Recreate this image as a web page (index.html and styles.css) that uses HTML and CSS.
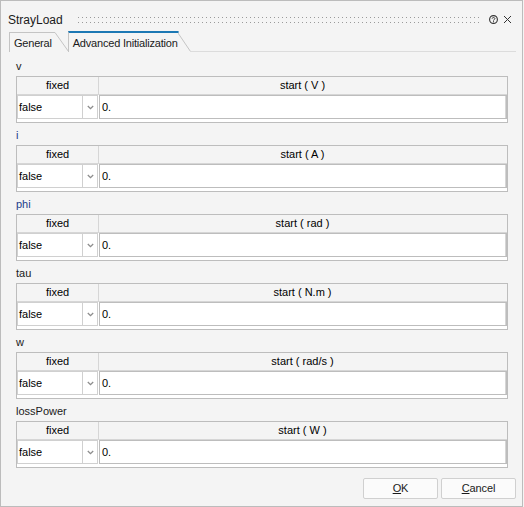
FILE: index.html
```html
<!DOCTYPE html>
<html>
<head>
<meta charset="utf-8">
<link rel="stylesheet" href="styles.css">
</head>
<body>
<div class="window">
  <div class="titlebar">
    <span class="title">StrayLoad</span>
    <svg class="grip" height="6"><defs><pattern id="dots" width="4" height="5" patternUnits="userSpaceOnUse"><rect width="1" height="1" fill="#9a9a9a"/></pattern></defs><rect width="100%" height="6" fill="url(#dots)"/></svg>
    <svg class="help" width="9" height="9" viewBox="0 0 9 9"><circle cx="4.5" cy="4.5" r="3.9" fill="none" stroke="#333" stroke-width="1.1"/><path d="M3.1 3.6 C3.1 2.2 5.9 2.2 5.9 3.6 C5.9 4.6 4.5 4.6 4.5 5.6" fill="none" stroke="#333" stroke-width="1"/><rect x="4" y="6.2" width="1" height="1" fill="#333"/></svg>
    <svg class="close" width="9" height="9" viewBox="0 0 9 9"><path d="M1 1 L8 8 M8 1 L1 8" stroke="#333" stroke-width="1"/></svg>
  </div>
  <div class="tabbar">
    <div class="tab">
      <span class="tab-label">General</span>
      <svg class="tab-slant" width="14" height="20" viewBox="0 0 14 20"><path d="M0 0.5 L13.5 19.5" stroke="#c4c4c4" stroke-width="1" fill="none"/></svg>
    </div>
    <div class="tab tab-active">
      <span class="tab-label">Advanced Initialization</span>
      <svg class="tab-slant" width="13" height="21" viewBox="0 0 13 21"><path d="M0 2 L12.5 20.5" stroke="#c4c4c4" stroke-width="1" fill="none"/><path d="M0 1 L0.6 1" stroke="#1c78b4" stroke-width="2"/></svg>
    </div>
    <div class="tab-line"></div>
  </div>
  <div class="content">
    <section class="param">
      <div class="param-name">v</div>
      <div class="grid">
        <div class="grid-head"><div class="col-fixed">fixed</div><div class="col-start">start ( V )</div></div>
        <div class="grid-row"><div class="combo"><span class="combo-text">false</span><span class="combo-arrow"><svg width="7" height="5" viewBox="0 0 7 5"><path d="M0.8 1 L3.5 3.7 L6.2 1" fill="none" stroke="#8c8c8c" stroke-width="1.3"/></svg></span></div><div class="input">0.</div></div>
      </div>
    </section>
    <section class="param">
      <div class="param-name param-name-mod">i</div>
      <div class="grid">
        <div class="grid-head"><div class="col-fixed">fixed</div><div class="col-start">start ( A )</div></div>
        <div class="grid-row"><div class="combo"><span class="combo-text">false</span><span class="combo-arrow"><svg width="7" height="5" viewBox="0 0 7 5"><path d="M0.8 1 L3.5 3.7 L6.2 1" fill="none" stroke="#8c8c8c" stroke-width="1.3"/></svg></span></div><div class="input">0.</div></div>
      </div>
    </section>
    <section class="param">
      <div class="param-name param-name-mod">phi</div>
      <div class="grid">
        <div class="grid-head"><div class="col-fixed">fixed</div><div class="col-start">start ( rad )</div></div>
        <div class="grid-row"><div class="combo"><span class="combo-text">false</span><span class="combo-arrow"><svg width="7" height="5" viewBox="0 0 7 5"><path d="M0.8 1 L3.5 3.7 L6.2 1" fill="none" stroke="#8c8c8c" stroke-width="1.3"/></svg></span></div><div class="input">0.</div></div>
      </div>
    </section>
    <section class="param">
      <div class="param-name">tau</div>
      <div class="grid">
        <div class="grid-head"><div class="col-fixed">fixed</div><div class="col-start">start ( N.m )</div></div>
        <div class="grid-row"><div class="combo"><span class="combo-text">false</span><span class="combo-arrow"><svg width="7" height="5" viewBox="0 0 7 5"><path d="M0.8 1 L3.5 3.7 L6.2 1" fill="none" stroke="#8c8c8c" stroke-width="1.3"/></svg></span></div><div class="input">0.</div></div>
      </div>
    </section>
    <section class="param">
      <div class="param-name">w</div>
      <div class="grid">
        <div class="grid-head"><div class="col-fixed">fixed</div><div class="col-start">start ( rad/s )</div></div>
        <div class="grid-row"><div class="combo"><span class="combo-text">false</span><span class="combo-arrow"><svg width="7" height="5" viewBox="0 0 7 5"><path d="M0.8 1 L3.5 3.7 L6.2 1" fill="none" stroke="#8c8c8c" stroke-width="1.3"/></svg></span></div><div class="input">0.</div></div>
      </div>
    </section>
    <section class="param">
      <div class="param-name">lossPower</div>
      <div class="grid">
        <div class="grid-head"><div class="col-fixed">fixed</div><div class="col-start">start ( W )</div></div>
        <div class="grid-row"><div class="combo"><span class="combo-text">false</span><span class="combo-arrow"><svg width="7" height="5" viewBox="0 0 7 5"><path d="M0.8 1 L3.5 3.7 L6.2 1" fill="none" stroke="#8c8c8c" stroke-width="1.3"/></svg></span></div><div class="input">0.</div></div>
      </div>
    </section>
  </div>
  <div class="buttons">
    <button class="btn"><u>O</u>K</button>
    <button class="btn"><u>C</u>ancel</button>
  </div>
</div>
</body>
</html>
```
FILE: styles.css
```css
html, body {
  margin: 0;
  padding: 0;
  background: #f4f4f4;
}
.window {
  width: 523px;
  height: 507px;
  box-sizing: border-box;
  border: 1px solid #bcbcbc;
  background: #f4f4f4;
  font-family: "Liberation Sans", Arial, sans-serif;
  color: #1a1a1a;
  display: flex;
  flex-direction: column;
}
.titlebar {
  display: flex;
  align-items: center;
  height: 30px;
  padding: 7px 10px 0 7px;
  box-sizing: border-box;
}
.title {
  font-size: 12px;
  line-height: 16px;
}
.grip {
  flex: 1;
  margin: 0 6px 0 15px;
}
.help {
  margin-right: 5px;
  margin-left: 1px;
}
.tabbar {
  display: flex;
  align-items: flex-end;
  height: 21px;
  margin-left: 8px;
  margin-right: 6px;
}
.tab {
  display: flex;
  align-items: flex-end;
  height: 20px;
}
.tab-label {
  display: block;
  height: 19px;
  border-left: 1px solid #c4c4c4;
  border-top: 1px solid #c4c4c4;
  padding: 0 3px 0 4px;
  font-size: 11px;
  letter-spacing: -0.2px;
  line-height: 20px;
}
.tab-slant {
  display: block;
}
.tab-active {
  height: 21px;
  margin-left: -1px;
}
.tab-active .tab-label {
  height: 19px;
  border-top: 2px solid #1c78b4;
  padding: 0 0 0 4px;
}
.tab-line {
  flex: 1;
  height: 1px;
  background: #dcdcdc;
}
.content {
  display: flex;
  flex-direction: column;
  gap: 5px;
  padding: 7px 14px 0 15px;
}
.param-name {
  font-size: 11px;
  line-height: 15px;
  color: #1a1a1a;
  margin-bottom: 2px;
}
.param-name-mod {
  color: #23408a;
}
.grid {
  box-sizing: border-box;
  height: 47px;
  border: 1px solid #bdbdbd;
  background: #ffffff;
  font-size: 11px;
  color: #000;
}
.grid-head {
  display: flex;
  height: 18px;
  box-sizing: border-box;
  border-bottom: 1px solid #d6d6d6;
  background: #f4f4f4;
  line-height: 17px;
}
.col-fixed {
  width: 82px;
  box-sizing: border-box;
  border-right: 1px solid #d6d6d6;
  text-align: center;
}
.col-start {
  flex: 1;
  text-align: center;
  padding-right: 1px;
}
.grid-row {
  display: flex;
  height: 24px;
}
.combo {
  width: 81px;
  box-sizing: border-box;
  border: 1px solid #d0d0d0;
  display: flex;
  background: #fff;
}
.combo-text {
  flex: 1;
  padding-left: 1px;
  line-height: 22px;
  border-right: 1px solid #d0d0d0;
}
.combo-arrow {
  width: 14px;
  display: flex;
  align-items: center;
  justify-content: center;
}
.combo-arrow svg {
  display: block;
}
.input {
  flex: 1;
  margin-left: 1px;
  box-sizing: border-box;
  border: 1px solid #bdbdbd;
  box-shadow: inset -1px 0 0 #d6d6d6;
  padding-left: 2px;
  line-height: 22px;
  background: #fff;
}
.buttons {
  display: flex;
  justify-content: flex-end;
  gap: 3px;
  padding: 0 6px 0 0;
  margin-top: 10px;
}
.btn {
  width: 75px;
  height: 21px;
  box-sizing: border-box;
  border: 1px solid #d0d0d0;
  border-radius: 2px;
  background: #fbfbfb;
  font-family: "Liberation Sans", Arial, sans-serif;
  font-size: 11px;
  letter-spacing: -0.1px;
  color: #1a1a1a;
  padding: 0;
  line-height: 19px;
}
```
